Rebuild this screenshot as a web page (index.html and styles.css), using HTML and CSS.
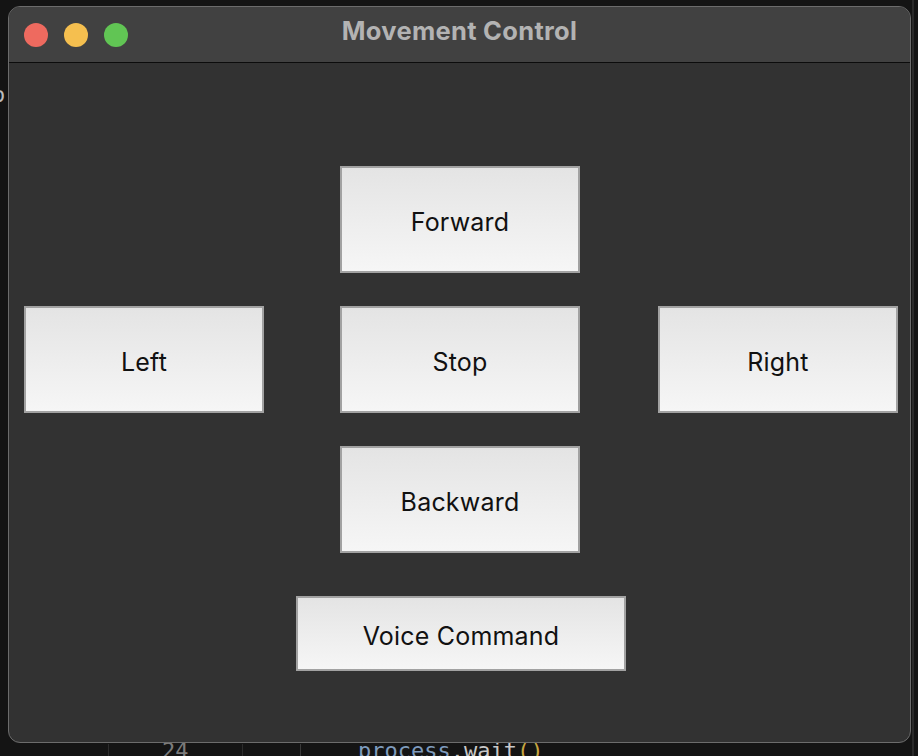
FILE: index.html
```html
<!DOCTYPE html>
<html lang="en">
<head>
<meta charset="utf-8">
<title>Movement Control</title>
<link rel="stylesheet" href="styles.css">
</head>
<body>
<div class="desk">
  <div class="bg-code bg-o">o</div>
  <div class="bg-code bg-num">24</div>
  <div class="bg-code bg-line"><span class="id">process</span><span class="dot">.</span><span class="fn">wait</span><span class="par">()</span></div>
  <div class="bg-rule r1"></div>
  <div class="bg-rule r2"></div>
  <div class="bg-rule r3"></div>
  <div class="bg-edge"></div>

  <div class="window">
    <div class="titlebar">
      <div class="lights">
        <span class="light red"></span>
        <span class="light yellow"></span>
        <span class="light green"></span>
      </div>
      <div class="title">Movement Control</div>
    </div>
    <div class="content">
      <div class="pad">
        <button class="btn b-fwd">Forward</button>
        <button class="btn b-left">Left</button>
        <button class="btn b-stop">Stop</button>
        <button class="btn b-right">Right</button>
        <button class="btn b-back">Backward</button>
      </div>
      <div class="voice-row">
        <button class="btn voice">Voice Command</button>
      </div>
    </div>
  </div>
</div>
</body>
</html>
```
FILE: styles.css
```css
html, body {
  margin: 0;
  padding: 0;
  background: #141414;
}
body {
  width: 918px;
  height: 756px;
  overflow: hidden;
  font-family: "Inter", "Liberation Sans", sans-serif;
}
.desk {
  position: relative;
  width: 918px;
  height: 756px;
  padding-top: 6px;
  box-sizing: border-box;
  background: #141414;
}
.bg-code {
  position: absolute;
  font-family: "DejaVu Sans Mono", monospace;
  font-size: 22px;
  line-height: 24px;
  color: #bcbcbc;
}
.bg-o { left: -8px; top: 83px; }
.bg-num { left: 162px; top: 739px; color: #7b7b7b; }
.bg-line { left: 358px; top: 739px; }
.bg-line .id { color: #7e9bbd; }
.bg-line .dot { color: #c8c8c8; }
.bg-line .fn { color: #c8c8c8; }
.bg-line .par { color: #c7a640; }
.bg-rule {
  position: absolute;
  top: 744px;
  width: 1px;
  height: 12px;
  background: #2c2c2c;
}
.r1 { left: 108px; }
.r2 { left: 242px; }
.r3 { left: 300px; background: #3a3a3a; }
.bg-edge {
  position: absolute;
  left: 912px;
  top: 0;
  width: 2px;
  height: 756px;
  background: #2a2a2a;
}

.window {
  position: relative;
  margin-left: 8px;
  width: 903px;
  height: 737px;
  box-sizing: border-box;
  border: 1px solid #6c6c6c;
  border-radius: 12px;
  overflow: hidden;
  background: #323232;
  display: flex;
  flex-direction: column;
}
.titlebar {
  position: relative;
  height: 55px;
  flex: none;
  background: #414141;
  border-bottom: 1px solid #0c0c0c;
  display: flex;
  align-items: center;
  justify-content: center;
}
.lights {
  position: absolute;
  left: 15px;
  top: 16px;
  display: flex;
  gap: 16px;
}
.light {
  width: 24px;
  height: 24px;
  border-radius: 50%;
  display: block;
}
.red { background: #ee6a5f; }
.yellow { background: #f5bf4f; }
.green { background: #61c554; }
.title {
  color: #b3b3b3;
  font-weight: 700;
  font-size: 25.5px;
  letter-spacing: 0.3px;
  margin-top: -8px;
  margin-left: 0;
}

.content {
  flex: 1;
  padding: 103px 0 0 15px;
}
.pad {
  display: grid;
  grid-template-columns: 240px 76px 240px 78px 240px;
  grid-template-rows: 107px 107px 107px;
  row-gap: 33px;
}
.btn {
  box-sizing: border-box;
  border: 2px solid #a2a2a2;
  border-radius: 0;
  background: linear-gradient(to bottom, #e4e4e4, #f6f6f6);
  color: #111;
  font-family: "Inter", "Liberation Sans", sans-serif;
  font-size: 25px;
  letter-spacing: 0.2px;
  padding: 0;
  margin: 0;
  display: flex;
  align-items: center;
  justify-content: center;
  padding-top: 5px;
}
.b-fwd { grid-column: 3; grid-row: 1; }
.b-left { grid-column: 1; grid-row: 2; }
.b-stop { grid-column: 3; grid-row: 2; }
.b-right { grid-column: 5; grid-row: 2; }
.b-back { grid-column: 3; grid-row: 3; }
.voice-row {
  margin-top: 43px;
  padding-left: 272px;
}
.voice {
  width: 330px;
  height: 75px;
}
```
